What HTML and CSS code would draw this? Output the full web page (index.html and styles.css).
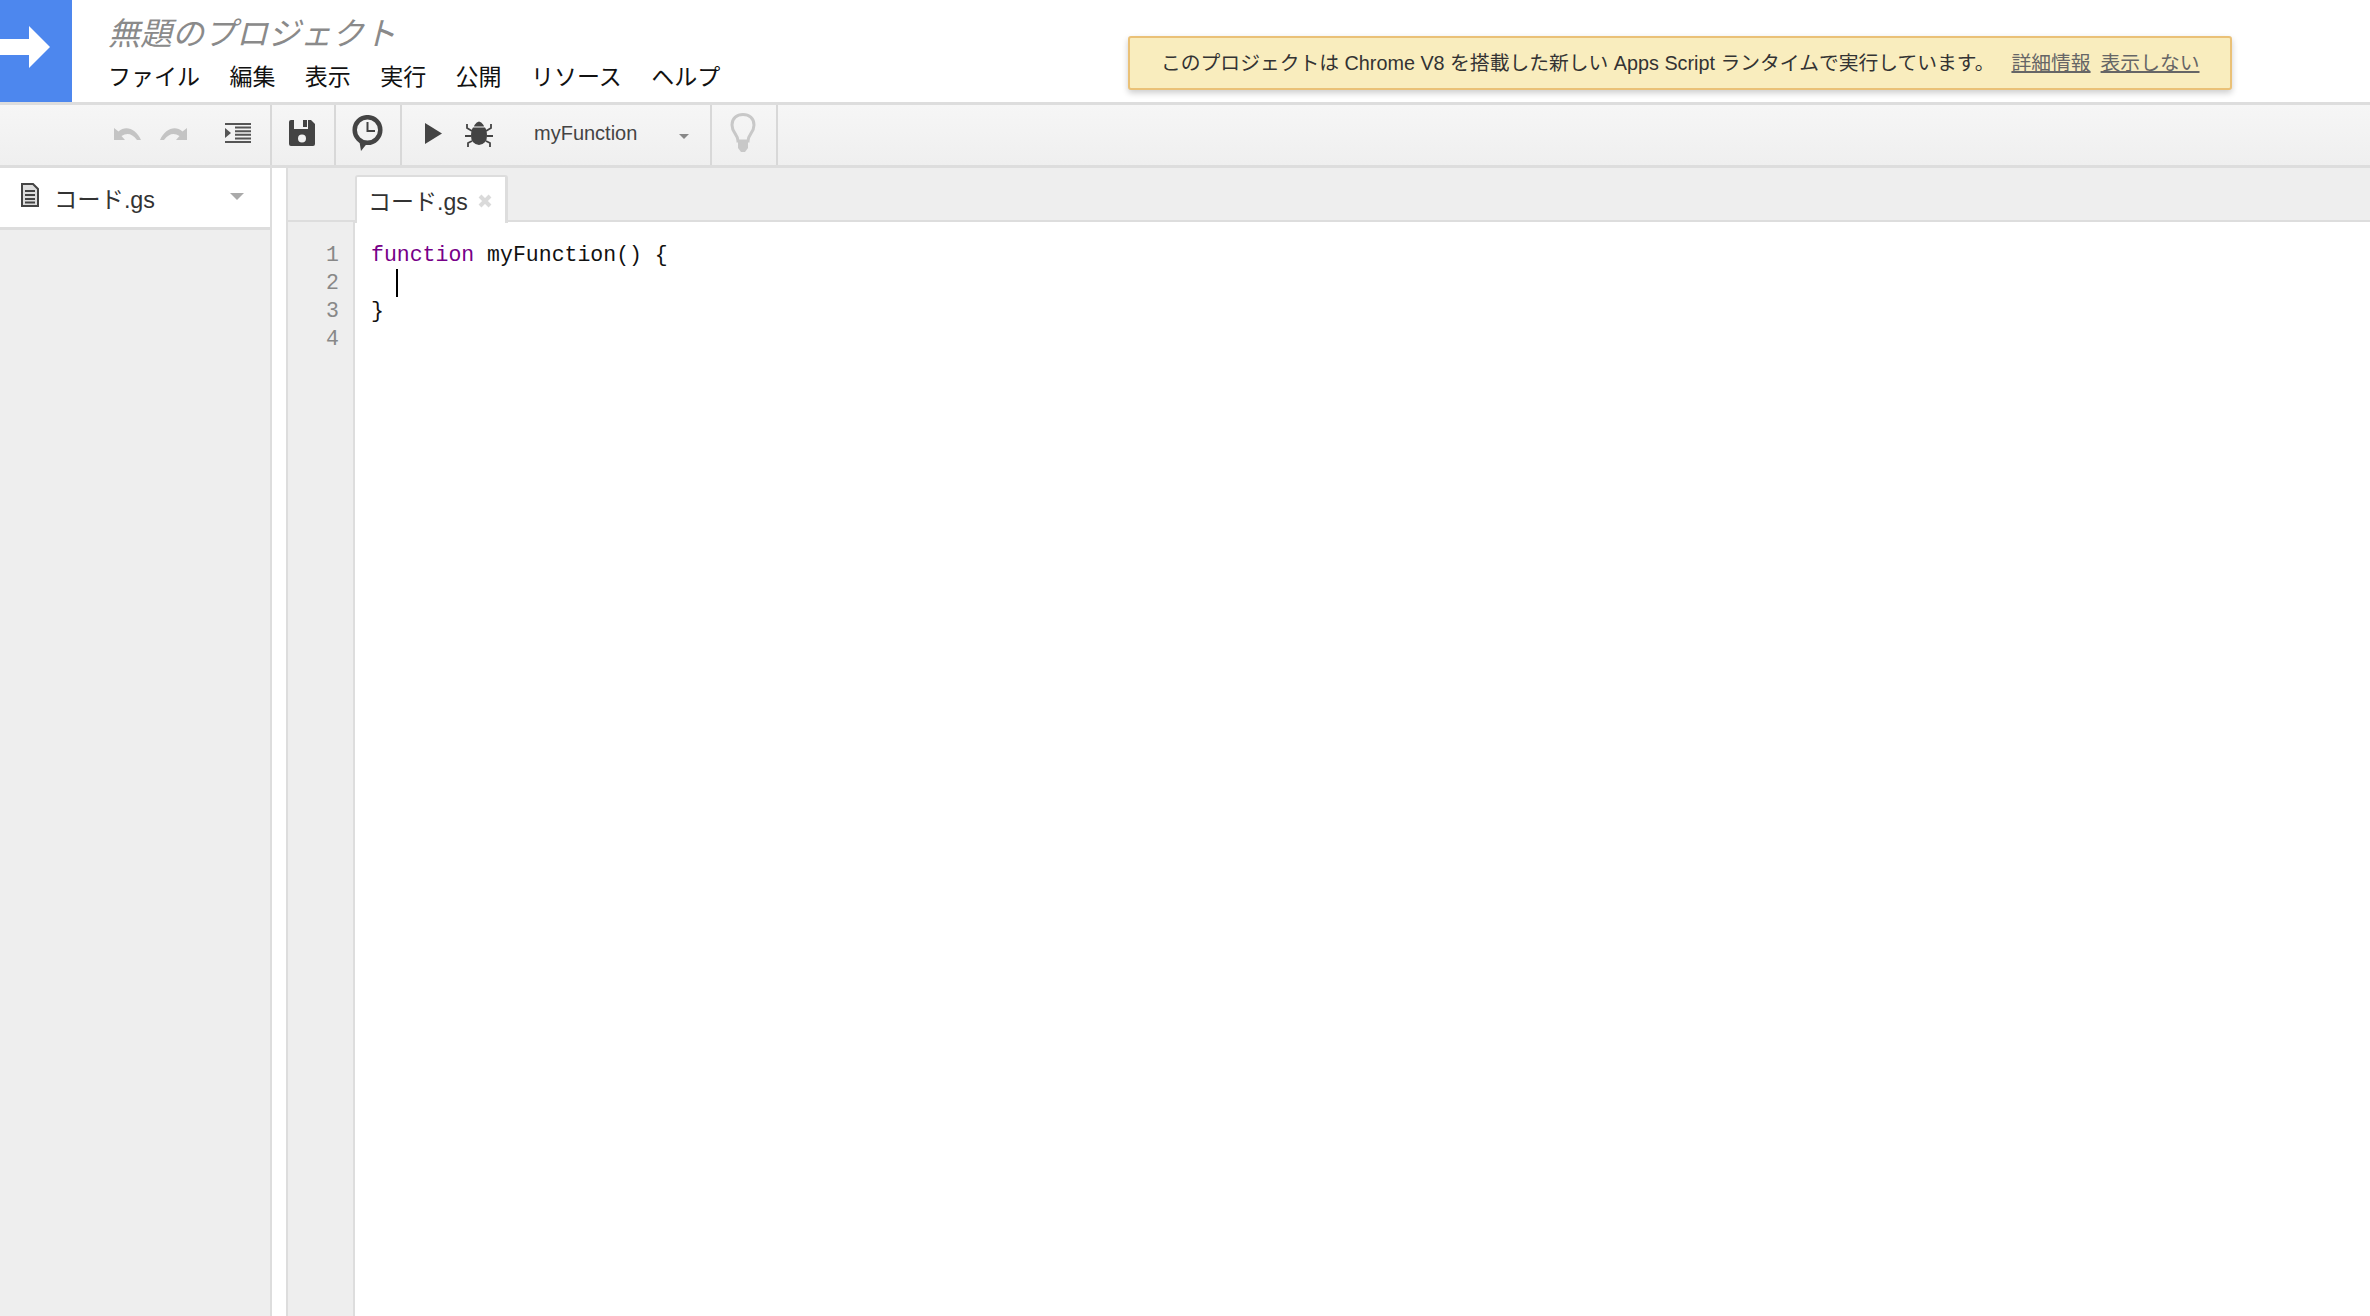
FILE: index.html
```html
<!DOCTYPE html>
<html lang="ja">
<head>
<meta charset="utf-8">
<title>無題のプロジェクト</title>
<link rel="stylesheet" href="styles.css">
</head>
<body>
<header class="header">
  <div class="logo">
    <svg width="72" height="102" viewBox="0 0 72 102"><path d="M0 39H29V26L50 47 29 68V55H0Z" fill="#fff"/></svg>
  </div>
  <div class="titles">
    <div class="title">無題のプロジェクト</div>
    <nav class="menu">
      <span>ファイル</span><span>編集</span><span>表示</span><span>実行</span><span>公開</span><span>リソース</span><span>ヘルプ</span>
    </nav>
  </div>
  <div class="banner">
    <span class="banner-text">このプロジェクトは Chrome V8 を搭載した新しい Apps Script ランタイムで実行しています。</span>
    <a class="banner-link">詳細情報</a>
    <a class="banner-link">表示しない</a>
  </div>
</header>
<div class="toolbar">
  <div class="tool-group group-edit">
    <svg class="ic-undo" width="27" height="14" viewBox="0 0 27 14"><path d="M0 2V14H11L7.500 10C13 6.500 18 7.500 23 14H27C22 3 12 -1 4.500 5.500Z" fill="#c4c4c4"/></svg>
    <svg class="ic-redo" width="27" height="14" viewBox="0 0 27 14"><path d="M27 2V14H16L19.500 10C14 6.500 9 7.500 4 14H0C5 3 15 -1 22.500 5.500Z" fill="#c4c4c4"/></svg>
    <svg class="ic-indent" width="26" height="20" viewBox="0 0 26 20"><path d="M0 0H26V2H0ZM10 3.600H26V5.600H10ZM10 7.200H26V9.200H10ZM10 10.800H26V12.800H10ZM10 14.400H26V16.400H10ZM0 18H26V20H0ZM0 5L6 10 0 15Z" fill="#555"/></svg>
  </div>
  <div class="tool-group group-save">
    <svg width="26" height="26" viewBox="0 0 26 26"><path d="M2 0H5V9H19V0H22L26 4V24Q26 26 24 26H2Q0 26 0 24V2Q0 0 2 0ZM13 14.500A4 4 0 1 0 13 22.500 4 4 0 1 0 13 14.500ZM14 0H18V7H14Z" fill="#444"/></svg>
  </div>
  <div class="tool-group group-history">
    <svg width="31" height="36" viewBox="0 0 31 36"><circle cx="15.500" cy="15" r="12.800" fill="none" stroke="#444" stroke-width="4.500"/><path d="M15.500 7V16H23" fill="none" stroke="#444" stroke-width="2"/><path d="M7 24L15 28.500 9 36Z" fill="#444"/></svg>
  </div>
  <div class="tool-group group-run">
    <svg class="ic-play" width="17" height="21" viewBox="0 0 17 21"><path d="M0 0L17 10.500 0 21Z" fill="#444"/></svg>
    <svg class="ic-bug" width="28" height="28" viewBox="0 0 28 28"><path d="M9.500 6Q14 -1 18.500 6L19 7.500H9ZM8 8.500H20Q22 11 22 17 22 25 14 26 6 25 6 17 6 11 8 8.500Z" fill="#444"/><path d="M7 12L2 9V5M6 17H0M7 22L3 24V28M21 12L26 9V5M22 17H28M21 22L25 24V28" fill="none" stroke="#444" stroke-width="1.800"/></svg>
    <span class="fn-name">myFunction</span>
    <span class="caret caret-run"></span>
  </div>
  <div class="tool-group group-bulb">
    <svg width="26" height="40" viewBox="0 0 26 40"><path d="M8 28C8 21 2 20 2 12 2 5 7 1.500 13 1.500S24 5 24 12C24 20 18 21 18 28Z" fill="none" stroke="#c8c8c8" stroke-width="3"/><path d="M8 29H18V35L15 39H11L8 35Z" fill="#c8c8c8"/></svg>
  </div>
</div>
<main class="workspace">
  <aside class="sidebar">
    <div class="file-row">
      <svg class="ic-file" width="18" height="24" viewBox="0 0 18 24"><path d="M1 1H12L17 6V23H1Z" fill="#ddd" stroke="#444" stroke-width="2"/><path d="M4 8H14M4 12H14M4 16H14M4 19.500H14" stroke="#444" stroke-width="2"/></svg>
      <span class="file-name">コード.gs</span>
      <span class="caret caret-file"></span>
    </div>
  </aside>
  <div class="spacer"></div>
  <section class="editor-area">
    <div class="tabbar">
      <div class="tab"><span>コード.gs</span>
        <svg class="tab-close" width="14" height="14" viewBox="0 0 14 14"><path d="M2 2L12 12M12 2L2 12" stroke="#dadada" stroke-width="4"/></svg>
      </div>
    </div>
    <div class="editor">
      <div class="gutter"><div>1</div><div>2</div><div>3</div><div>4</div></div>
      <div class="code">
        <div><span class="kw">function</span> myFunction() {</div>
        <div class="cursor-line"><span class="cursor"></span></div>
        <div>}</div>
        <div>&nbsp;</div>
      </div>
    </div>
  </section>
</main>
</body>
</html>
```
FILE: styles.css
```css
* { box-sizing: border-box; }
html, body { height: 100%; }
body {
  margin: 0;
  height: 1316px;
  overflow: hidden;
  display: flex;
  flex-direction: column;
  background: #fff;
  font-family: "Liberation Sans", "Noto Sans CJK JP", sans-serif;
  color: #222;
}
.header {
  position: relative;
  flex: none;
  height: 105px;
  display: flex;
  border-bottom: 3px solid #ddd;
}
.logo {
  width: 72px;
  height: 102px;
  background: #4d87ee;
}
.logo svg { display: block; }
.titles {
  margin-left: 36px;
  padding-top: 12px;
}
.title {
  font-size: 32px;
  line-height: 44px;
  font-style: italic;
  color: #8a8a8a;
  white-space: nowrap;
}
.menu {
  display: flex;
  gap: 29.400px;
  margin-top: 6px;
  font-size: 23px;
  line-height: 30px;
  color: #111;
  white-space: nowrap;
}
.banner {
  position: absolute;
  left: 1128px;
  top: 36px;
  width: 1104px;
  height: 54px;
  display: flex;
  align-items: center;
  padding-left: 31px;
  padding-bottom: 4px;
  background: #f9edbe;
  border: 2px solid #eac177;
  border-radius: 3px;
  box-shadow: 0 3px 6px rgba(0, 0, 0, 0.2);
  font-size: 19.800px;
  color: #333;
  white-space: nowrap;
}
.banner-text { margin-right: 17px; }
.banner-link {
  margin-right: 10px;
  color: #666;
  text-decoration: underline;
  text-decoration-thickness: 2px;
}
.toolbar {
  flex: none;
  height: 63px;
  display: flex;
  background: linear-gradient(#f6f6f6, #efefef);
  border-bottom: 3px solid #ddd;
}
.tool-group {
  display: flex;
  align-items: center;
  height: 60px;
  padding-bottom: 4px;
  border-right: 2px solid #d8d8d8;
}
.group-edit { width: 272px; padding-left: 114px; }
.ic-undo { margin-right: 19px; }
.ic-redo { margin-right: 38px; }
.group-save { width: 64px; padding-left: 17px; }
.group-history { width: 66px; padding-left: 16px; }
.group-run { width: 310px; padding-left: 23px; }
.ic-bug { margin-left: 23px; }
.fn-name {
  margin-left: 41px;
  font-size: 20px;
  color: #444;
}
.caret {
  width: 0;
  height: 0;
  border-style: solid;
  border-color: #888 transparent transparent;
}
.caret-run { margin-left: 42px; margin-top: 6px; border-width: 5px 5px 0; }
.group-bulb { width: 66px; padding-left: 18px; }
.workspace {
  flex: 1;
  min-height: 0;
  display: flex;
}
.sidebar {
  width: 272px;
  flex: none;
  background: #eee;
  border-right: 2px solid #ddd;
}
.file-row {
  height: 62px;
  display: flex;
  align-items: center;
  padding-left: 21px;
  background: #fff;
  border-bottom: 3px solid #ddd;
}
.ic-file { margin-top: -6px; }
.file-name {
  margin-left: 15px;
  font-size: 23.300px;
  color: #333;
}
.caret-file { margin-left: 75px; margin-top: -2px; border-width: 7px 7px 0; border-top-color: #aaa; }
.spacer { width: 14px; flex: none; }
.editor-area {
  flex: 1;
  min-width: 0;
  display: flex;
  flex-direction: column;
  border-left: 2px solid #ddd;
}
.tabbar {
  flex: none;
  height: 54px;
  background: #eee;
  border-bottom: 2px solid #ddd;
  padding-left: 67px;
  padding-top: 7px;
}
.tab {
  display: flex;
  align-items: center;
  width: 153px;
  height: 48px;
  padding-left: 11px;
  background: #fff;
  border: 2px solid #ddd;
  border-bottom: 0;
  border-right-width: 3px;
  border-radius: 3px 3px 0 0;
  font-size: 23px;
  color: #333;
  white-space: nowrap;
}
.tab-close { margin-left: 10px; margin-top: 1px; }
.editor {
  flex: 1;
  min-height: 0;
  display: flex;
  font-family: "Liberation Mono", monospace;
  font-size: 21.500px;
  line-height: 28px;
}
.gutter {
  width: 67px;
  flex: none;
  padding-top: 19px;
  padding-right: 14px;
  text-align: right;
  background: #eee;
  color: #888;
  border-right: 2px solid #ddd;
}
.code {
  padding-top: 19px;
  padding-left: 16px;
  color: #111;
}
.kw { color: #708; }
.cursor-line { height: 28px; padding-left: 25px; }
.cursor {
  display: block;
  width: 2px;
  height: 28px;
  background: #000;
}
```
